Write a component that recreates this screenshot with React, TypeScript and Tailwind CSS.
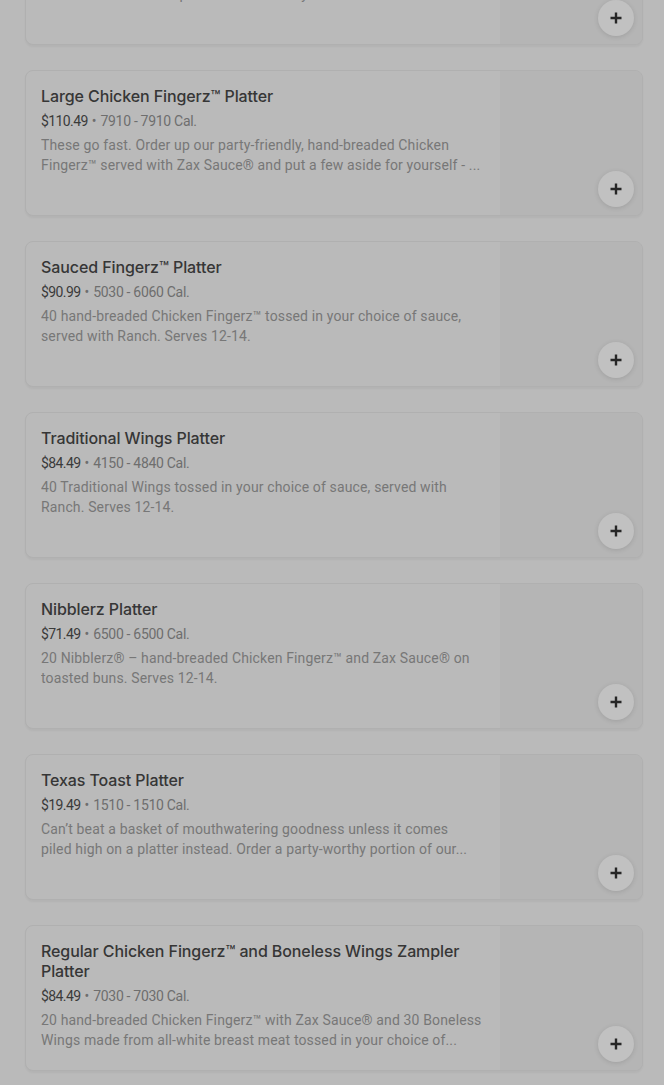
import React from 'react';

type Item = {
  name: string;
  price: string;
  cal: string;
  desc: string;
};

const ITEMS: Item[] = [
  {
    name: 'Medium Chicken Fingerz™ Platter',
    price: '$62.49',
    cal: '4010 - 4010 Cal.',
    desc: 'Order up our party-friendly, hand-breaded Chicken Fingerz™ served with Zax Sauce® and put a few aside for yourself - ...',
  },
  {
    name: 'Large Chicken Fingerz™ Platter',
    price: '$110.49',
    cal: '7910 - 7910 Cal.',
    desc: 'These go fast. Order up our party-friendly, hand-breaded Chicken Fingerz™ served with Zax Sauce® and put a few aside for yourself - ...',
  },
  {
    name: 'Sauced Fingerz™ Platter',
    price: '$90.99',
    cal: '5030 - 6060 Cal.',
    desc: '40 hand-breaded Chicken Fingerz™ tossed in your choice of sauce, served with Ranch. Serves 12-14.',
  },
  {
    name: 'Traditional Wings Platter',
    price: '$84.49',
    cal: '4150 - 4840 Cal.',
    desc: '40 Traditional Wings tossed in your choice of sauce, served with Ranch. Serves 12-14.',
  },
  {
    name: 'Nibblerz Platter',
    price: '$71.49',
    cal: '6500 - 6500 Cal.',
    desc: '20 Nibblerz® – hand-breaded Chicken Fingerz™ and Zax Sauce® on toasted buns. Serves 12-14.',
  },
  {
    name: 'Texas Toast Platter',
    price: '$19.49',
    cal: '1510 - 1510 Cal.',
    desc: 'Can’t beat a basket of mouthwatering goodness unless it comes piled high on a platter instead. Order a party-worthy portion of our...',
  },
  {
    name: 'Regular Chicken Fingerz™ and Boneless Wings Zampler Platter',
    price: '$84.49',
    cal: '7030 - 7030 Cal.',
    desc: '20 hand-breaded Chicken Fingerz™ with Zax Sauce® and 30 Boneless Wings made from all-white breast meat tossed in your choice of...',
  },
];

const PlusIcon = () => (
  <svg width="14" height="14" viewBox="0 0 14 14" fill="none">
    <path d="M7 1.5v11M1.5 7h11" stroke="#262626" strokeWidth="2.4" />
  </svg>
);

const MenuCard: React.FC<{ item: Item }> = ({ item }) => (
  <div className="flex h-[146px] overflow-hidden rounded-lg border border-[#b0b0b0] bg-[#bababa] shadow-[0_2px_2px_rgba(0,0,0,0.04)]">
    <div className="flex-1 min-w-0 pl-[15px] pr-4 pt-[15px]">
      <div className="max-w-[441px]">
        <h3
          className="text-[16px] leading-5 font-medium tracking-[-0.1px] text-[#363636]"
          style={{ fontFamily: 'Inter, Roboto, sans-serif' }}
        >
          {item.name}
        </h3>
        <div className="mt-[5px] text-[14px] leading-5">
          <span className="tracking-[-0.6px] text-[#3a3a3a]">{item.price}</span>
          <span className="mx-[4px] text-[#6e6e6e]">•</span>
          <span className="tracking-[-0.3px] text-[#6e6e6e]">{item.cal}</span>
        </div>
        <p className="mt-1 text-[14px] leading-5 tracking-[0.14px] text-[#777777] line-clamp-2">{item.desc}</p>
      </div>
    </div>
    <div className="relative w-[142px] shrink-0 bg-[#b5b5b5]">
      <button className="absolute right-[8px] bottom-[8px] flex h-9 w-9 items-center justify-center rounded-full bg-[#c1c1c1] shadow-[0_1px_5px_rgba(0,0,0,0.12)]">
        <PlusIcon />
      </button>
    </div>
  </div>
);

export default function App() {
  return (
    <div
      className="h-[1085px] overflow-hidden bg-[#bababa]"
      style={{ fontFamily: 'Roboto, "Liberation Sans", sans-serif' }}
    >
      <div className="-mt-[101px] flex flex-col gap-[25px] pl-[25px] pr-[21px]">
        {ITEMS.map((item) => (
          <MenuCard key={item.name} item={item} />
        ))}
      </div>
    </div>
  );
}
